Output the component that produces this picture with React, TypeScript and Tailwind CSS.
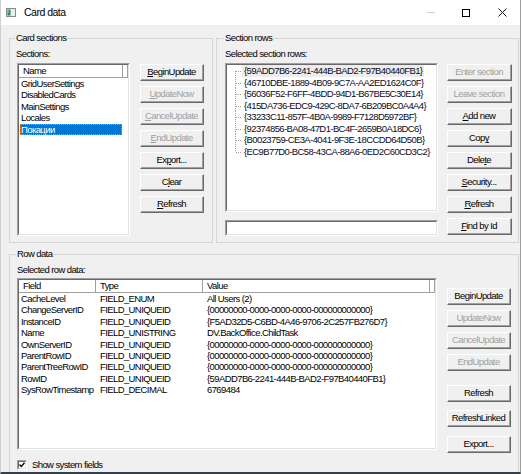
import React from "react";

const sections = ["GridUserSettings", "DisabledCards", "MainSettings", "Locales", "Покации"];

const sectionRows = [
  "{59ADD7B6-2241-444B-BAD2-F97B40440FB1}",
  "{46710DBE-1889-4B09-9C7A-AA2ED1624C0F}",
  "{56036F52-F6FF-4BDD-94D1-B67BE5C30E14}",
  "{415DA736-EDC9-429C-8DA7-6B209BC0A4A4}",
  "{33233C11-857F-4B0A-9989-F7128D5972BF}",
  "{92374856-BA08-47D1-BC4F-2659B0A18DC6}",
  "{B0023759-CE3A-4041-9F3E-18CCDD64D50B}",
  "{EC9B77D0-BC58-43CA-88A6-0ED2C60CD3C2}",
];

const zero = "{00000000-0000-0000-0000-000000000000}";

const rowData: [string, string, string][] = [
  ["CacheLevel", "FIELD_ENUM", "All Users (2)"],
  ["ChangeServerID", "FIELD_UNIQUEID", zero],
  ["InstanceID", "FIELD_UNIQUEID", "{F5AD32D5-C6BD-4A46-9706-2C257FB276D7}"],
  ["Name", "FIELD_UNISTRING", "DV.BackOffice.ChildTask"],
  ["OwnServerID", "FIELD_UNIQUEID", zero],
  ["ParentRowID", "FIELD_UNIQUEID", zero],
  ["ParentTreeRowID", "FIELD_UNIQUEID", zero],
  ["RowID", "FIELD_UNIQUEID", "{59ADD7B6-2241-444B-BAD2-F97B40440FB1}"],
  ["SysRowTimestamp", "FIELD_DECIMAL", "6769484"],
];

// label with one underlined mnemonic letter
const Mn = ({ text, at }: { text: string; at?: number }) => {
  if (at === undefined) return <>{text}</>;
  return (
    <>
      {text.slice(0, at)}
      <span className="underline underline-offset-[1px]">{text[at]}</span>
      {text.slice(at + 1)}
    </>
  );
};

const Btn = ({
  text,
  at,
  disabled,
  w = "w-[64px]",
  className = "",
}: {
  text: string;
  at?: number;
  disabled?: boolean;
  w?: string;
  className?: string;
}) => (
  <div
    className={`h-[17px] ${w} shrink-0 border-t border-l border-t-white border-l-white border-b border-r border-b-[#696969] border-r-[#696969] bg-[#f0f0f0] ${className}`}
  >
    <div
      className={`flex h-full w-full items-center justify-center border-b border-r border-b-[#a0a0a0] border-r-[#a0a0a0] leading-none ${
        disabled ? "text-[#a0a0a0]" : "text-black"
      }`}
    >
      <Mn text={text} at={at} />
    </div>
  </div>
);

const Sunken = ({ className = "", children }: { className?: string; children?: React.ReactNode }) => (
  <div
    className={`border-t border-l border-t-[#a0a0a0] border-l-[#a0a0a0] border-b border-r border-b-white border-r-white ${className}`}
  >
    <div className="h-full w-full overflow-hidden border-t border-l border-t-[#696969] border-l-[#696969] border-b border-r border-b-[#e3e3e3] border-r-[#e3e3e3] bg-white">
      {children}
    </div>
  </div>
);

const Group = ({
  title,
  className,
  labelLeft,
  children,
}: {
  title: string;
  className: string;
  labelLeft: string;
  children: React.ReactNode;
}) => (
  <div className={`relative shrink-0 border border-[#d5d5d5] ${className}`}>
    <span className={`absolute -top-[7px] ${labelLeft} bg-[#f0f0f0] px-[1px] leading-[11px]`}>{title}</span>
    {children}
  </div>
);

const TreeLine = ({ first, last }: { first: boolean; last: boolean }) => (
  <svg width="7" height="11.5" viewBox="0 0 7 11.5" className="shrink-0">
    <line
      x1="0.5"
      y1={first ? 6 : 0}
      x2="0.5"
      y2={last ? 6 : 11.5}
      stroke="#a0a0a0"
      strokeWidth="1"
      strokeDasharray="1 1"
    />
    <line x1="1" y1="6.5" x2="7" y2="6.5" stroke="#a0a0a0" strokeWidth="1" strokeDasharray="1 1" />
  </svg>
);

export default function App() {
  return (
    <div className="h-[474px] w-[522px] overflow-hidden bg-white font-['Liberation_Sans',Arial,sans-serif] text-[9.5px] tracking-[-0.6px] text-black">
      <div className="flex h-[474px] w-[521px] flex-col border-l border-r border-b-2 border-l-[#cfcfcf] border-r-[#a0a0a0] border-b-[#34404c]">
        {/* title bar */}
        <div className="flex h-[25px] shrink-0 items-center bg-white pl-[5px]">
          <svg width="10" height="9" viewBox="0 0 10 9">
            <rect x="0.5" y="0.5" width="9" height="8" fill="#ececec" stroke="#8a8a8a" />
            <rect x="1.5" y="1.5" width="3" height="6" fill="#2f7f76" />
            <rect x="2" y="2" width="1" height="3" fill="#6fb9ad" />
          </svg>
          <span className="ml-[8px] text-[10.5px] tracking-[-0.5px]">Card data</span>
          <div className="ml-auto flex h-full">
            <div className="flex h-full w-[35px] items-center justify-center">
              <div className="h-px w-[8px] bg-[#c8c8c8]" />
            </div>
            <div className="flex h-full w-[36px] items-center justify-center">
              <div className="h-[8px] w-[8px] border border-black" />
            </div>
            <div className="flex h-full w-[36px] items-center justify-center">
              <svg width="9" height="9" viewBox="0 0 9 9">
                <path d="M0.5 0.5 L8.5 8.5 M8.5 0.5 L0.5 8.5" stroke="#111" strokeWidth="1" />
              </svg>
            </div>
          </div>
        </div>

        {/* body */}
        <div className="flex-1 overflow-hidden bg-[#f0f0f0] pl-[8px] pt-[13px]">
          <div className="flex h-[205px] gap-[3px]">
            <Group title="Card sections" className="h-[205px] w-[204px]" labelLeft="left-[5px]">
              <div className="flex pl-[6px] pt-[9px]">
                <div className="w-[114px]">
                  <div className="h-[11px] leading-[11px]">Sections:</div>
                  <Sunken className="ml-[1px] mt-[4px] h-[173px] w-[113px]">
                    <div className="flex h-[13px] border-b border-b-[#a0a0a0] leading-[12px]">
                      <div className="w-[104px] border-r border-r-[#a0a0a0] pl-[4px]">Name</div>
                      <div className="flex-1 border-r border-r-[#a0a0a0]" />
                    </div>
                    {sections.map((s, i) =>
                      i === 4 ? (
                        <div
                          key={s}
                          className="ml-[1px] h-[11.4px] w-[102px] border border-dotted border-[#ff8728] bg-[#0078d7] pl-[0px] leading-[9.4px] text-white"
                        >
                          {s}
                        </div>
                      ) : (
                        <div key={s} className="h-[11.4px] pl-[2px] leading-[11.4px]">
                          {s}
                        </div>
                      )
                    )}
                  </Sunken>
                </div>
                <div className="ml-[10px] flex flex-col gap-[5px] pt-[16px]">
                  <Btn text="BeginUpdate" at={0} />
                  <Btn text="UpdateNow" at={0} disabled />
                  <Btn text="CancelUpdate" at={0} disabled />
                  <Btn text="EndUpdate" at={0} disabled />
                  <Btn text="Export..." at={2} />
                  <Btn text="Clear" at={1} />
                  <Btn text="Refresh" at={0} />
                </div>
              </div>
            </Group>

            <Group title="Section rows" className="h-[205px] w-[303px]" labelLeft="left-[7px]">
              <div className="flex pl-[8px] pt-[9px]">
                <div className="w-[213px]">
                  <div className="h-[11px] leading-[11px]">Selected section rows:</div>
                  <Sunken className="mt-[4px] h-[149px] w-[213px]">
                    <div className="pl-[8px]">
                      {sectionRows.map((r, i) => (
                        <div key={r} className="flex h-[11.5px] items-start">
                          <TreeLine first={i === 0} last={i === sectionRows.length - 1} />
                          <span
                            className={`px-[2px] leading-[11.5px] text-[#0a0a1e] ${
                              i === 0 ? "bg-[#ececec]" : ""
                            }`}
                          >
                            {r}
                          </span>
                        </div>
                      ))}
                    </div>
                  </Sunken>
                  <Sunken className="mt-[8px] h-[16px] w-[213px]" />
                </div>
                <div className="ml-[9px] flex flex-col gap-[5px] pt-[16px]">
                  <Btn text="Enter section" w="w-[65px]" disabled />
                  <Btn text="Leave section" w="w-[65px]" disabled />
                  <Btn text="Add new" at={0} w="w-[65px]" />
                  <Btn text="Copy" at={3} w="w-[65px]" />
                  <Btn text="Delete" at={4} w="w-[65px]" />
                  <Btn text="Security..." at={0} w="w-[65px]" />
                  <Btn text="Refresh" at={0} w="w-[65px]" />
                  <Btn text="Find by Id" at={0} w="w-[65px]" />
                </div>
              </div>
            </Group>
          </div>

          <Group title="Row data" className="mt-[11px] h-[232px] w-[510px]" labelLeft="left-[6px]">
            <div className="flex pl-[7px] pt-[9px]">
              <div className="w-[420px]">
                <div className="h-[11px] leading-[11px]">Selected row data:</div>
                <Sunken className="mt-[3px] h-[172px] w-[420px]">
                  <div className="flex h-[13px] border-b border-b-[#a0a0a0] leading-[12px]">
                    <div className="w-[77px] border-r border-r-[#a0a0a0] pl-[4px]">Field</div>
                    <div className="w-[107px] border-r border-r-[#a0a0a0] pl-[4px]">Type</div>
                    <div className="w-[227px] border-r border-r-[#a0a0a0] pl-[4px]">Value</div>
                    <div className="flex-1 border-r border-r-[#a0a0a0]" />
                  </div>
                  {rowData.map(([f, t, v]) => (
                    <div key={f} className="flex h-[11.4px] whitespace-nowrap leading-[11.4px]">
                      <div className="w-[77px] overflow-hidden pl-[2px]">{f}</div>
                      <div className="w-[107px] overflow-hidden pl-[4px]">{t}</div>
                      <div className="w-[227px] overflow-hidden pl-[4px]">{v}</div>
                    </div>
                  ))}
                </Sunken>
                <div className="mt-[10px] flex h-[10px] items-center">
                  <Sunken className="h-[10px] w-[10px]">
                    <svg width="6" height="6" viewBox="0 0 6 6" className="block">
                      <path d="M0.5 2.5 L2.3 4.5 L5.5 0.8" fill="none" stroke="#000" strokeWidth="1.3" />
                    </svg>
                  </Sunken>
                  <span className="ml-[5px] leading-[10px]">Show system fields</span>
                </div>
              </div>
              <div className="ml-[10px] flex flex-col pt-[24px]">
                <Btn text="BeginUpdate" />
                <Btn text="UpdateNow" disabled className="mt-[5px]" />
                <Btn text="CancelUpdate" disabled className="mt-[5px]" />
                <Btn text="EndUpdate" disabled className="mt-[5px]" />
                <Btn text="Refresh" className="mt-[14px]" />
                <Btn text="RefreshLinked" className="mt-[8px]" />
                <Btn text="Export..." className="mt-[9px]" />
              </div>
            </div>
          </Group>
        </div>
      </div>
    </div>
  );
}
